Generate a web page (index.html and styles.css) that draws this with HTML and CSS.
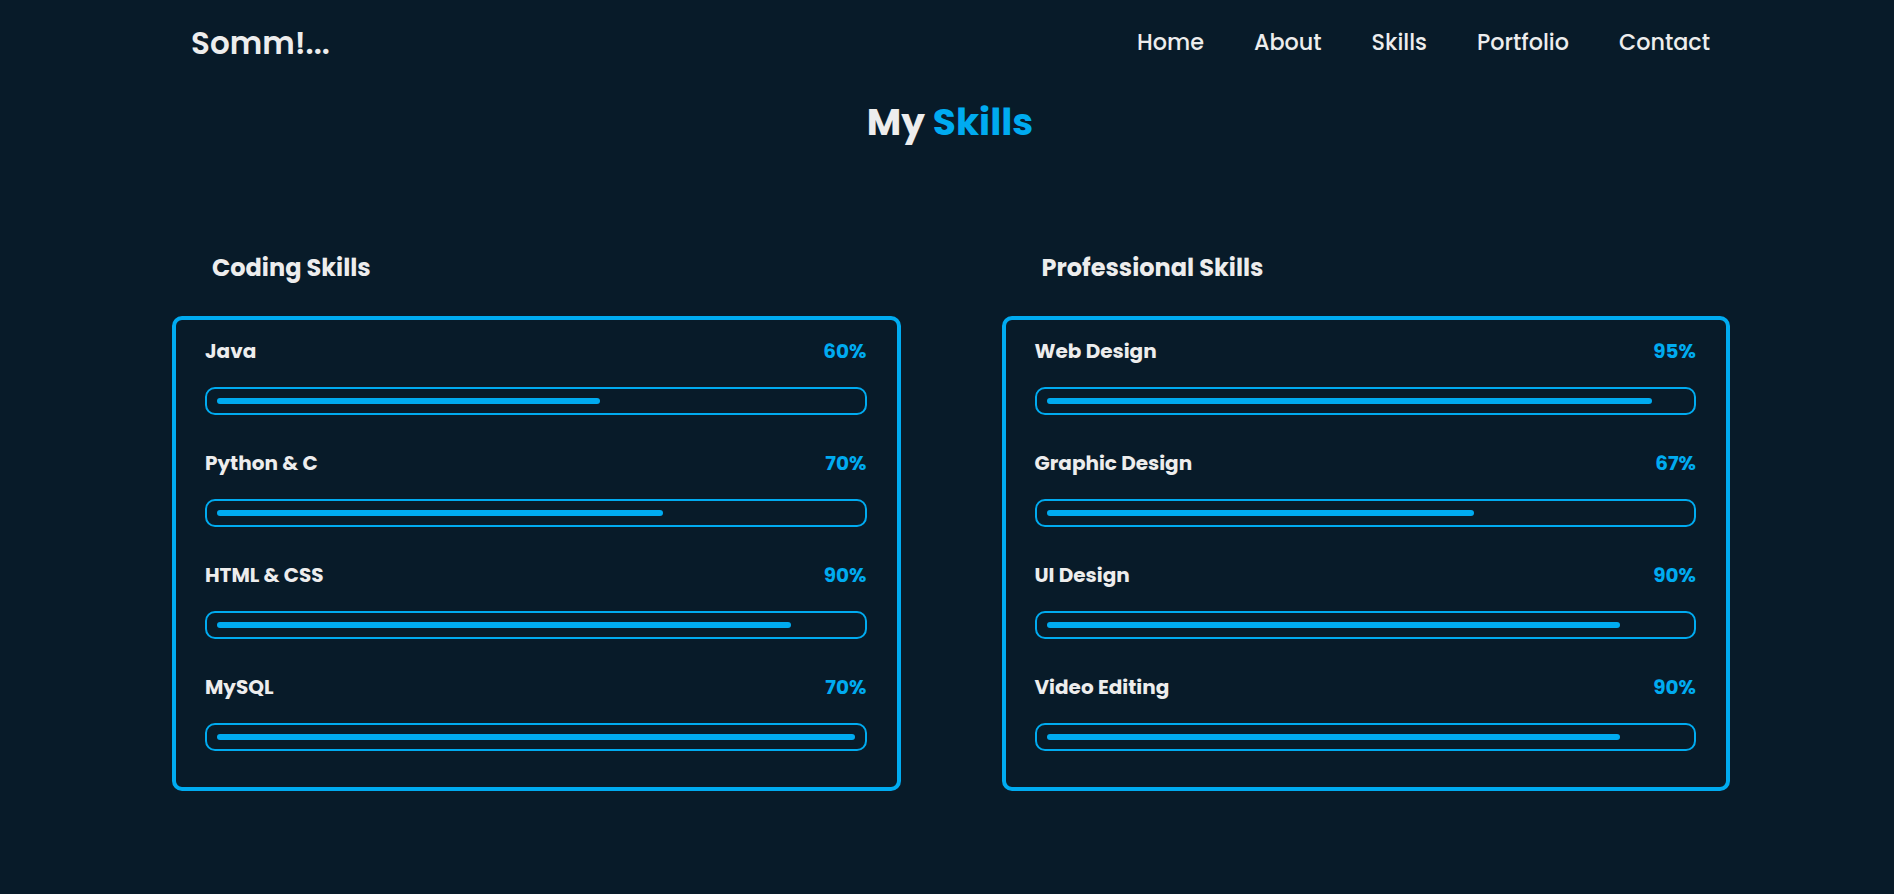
FILE: index.html
```html
<!DOCTYPE html>
<html lang="en">
<head>
<meta charset="utf-8">
<title>My Skills</title>
<link rel="stylesheet" href="styles.css">
</head>
<body>
<header class="header">
  <a class="logo" href="#">Somm!...</a>
  <nav class="nav">
    <a href="#">Home</a>
    <a href="#">About</a>
    <a href="#">Skills</a>
    <a href="#">Portfolio</a>
    <a href="#">Contact</a>
  </nav>
</header>
<section class="skills">
  <h2 class="title">My <span>Skills</span></h2>
  <div class="columns">
    <div class="column">
      <h3 class="col-title">Coding Skills</h3>
      <div class="card">
        <div class="skill">
          <div class="info"><span>Java</span><span class="pct">60%</span></div>
          <div class="bar"><span class="fill" style="width:60%"></span></div>
        </div>
        <div class="skill">
          <div class="info"><span>Python &amp; C</span><span class="pct">70%</span></div>
          <div class="bar"><span class="fill" style="width:70%"></span></div>
        </div>
        <div class="skill">
          <div class="info"><span>HTML &amp; CSS</span><span class="pct">90%</span></div>
          <div class="bar"><span class="fill" style="width:90%"></span></div>
        </div>
        <div class="skill">
          <div class="info"><span>MySQL</span><span class="pct">70%</span></div>
          <div class="bar"><span class="fill" style="width:100%"></span></div>
        </div>
      </div>
    </div>
    <div class="column">
      <h3 class="col-title">Professional Skills</h3>
      <div class="card">
        <div class="skill">
          <div class="info"><span>Web Design</span><span class="pct">95%</span></div>
          <div class="bar"><span class="fill" style="width:95%"></span></div>
        </div>
        <div class="skill">
          <div class="info"><span>Graphic Design</span><span class="pct">67%</span></div>
          <div class="bar"><span class="fill" style="width:67%"></span></div>
        </div>
        <div class="skill">
          <div class="info"><span>UI Design</span><span class="pct">90%</span></div>
          <div class="bar"><span class="fill" style="width:90%"></span></div>
        </div>
        <div class="skill">
          <div class="info"><span>Video Editing</span><span class="pct">90%</span></div>
          <div class="bar"><span class="fill" style="width:90%"></span></div>
        </div>
      </div>
    </div>
  </div>
</section>
</body>
</html>
```

FILE: styles.css
```css
* { box-sizing: border-box; margin: 0; padding: 0; }
html, body { background: #081b29; }
body {
  font-family: "Poppins", "Inter", "Noto Sans", sans-serif;
  color: #ededed;
  min-height: 894px;
}
a { color: inherit; text-decoration: none; }

.header {
  display: flex;
  justify-content: space-between;
  align-items: center;
  padding: 19px 184px 0 191px;
}
.logo { font-size: 31px; font-weight: 600; line-height: 48px; }
.nav { display: flex; gap: 50px; }
.nav a { font-size: 22.3px; font-weight: 500; line-height: 48px; }

.skills { padding: 0 164px 0 172px; }
.title {
  text-align: center;
  font-size: 37.5px;
  font-weight: 700;
  line-height: 60px;
  margin-top: 25px;
  padding-right: 2px;
}
.title span { color: #00abf0; }

.columns {
  display: grid;
  grid-template-columns: 1fr 1fr;
  column-gap: 101px;
  margin-top: 99px;
}
.col-title {
  font-size: 24px;
  font-weight: 700;
  line-height: 34px;
  padding-left: 40px;
  margin-bottom: 31px;
}
.card {
  border: 4px solid #00abf0;
  border-radius: 10px;
  padding: 16px 30px 36px 29px;
  display: flex;
  flex-direction: column;
  gap: 33px;
}
.info {
  display: flex;
  justify-content: space-between;
  font-size: 20px;
  font-weight: 700;
  line-height: 30px;
}
.pct { color: #00abf0; }
.bar {
  margin-top: 21px;
  height: 28px;
  border: 2px solid #00abf0;
  border-radius: 10px;
  padding: 0 10px;
  display: flex;
  align-items: center;
}
.fill {
  display: block;
  height: 6px;
  border-radius: 3px;
  background: #00abf0;
}
```
